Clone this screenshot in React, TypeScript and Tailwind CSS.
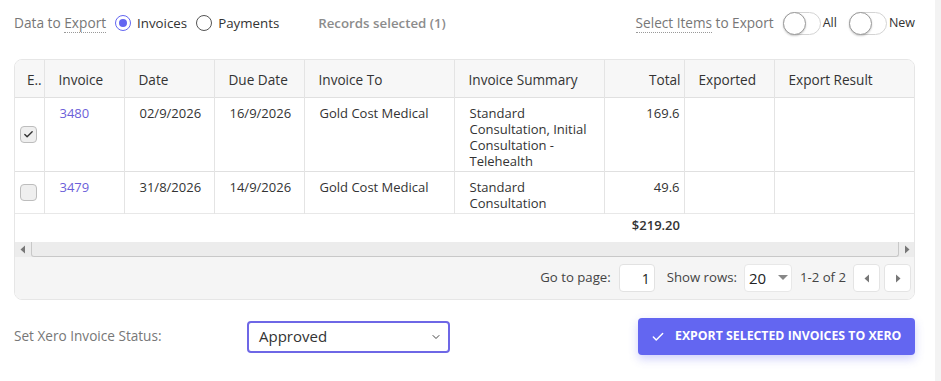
import { Check, ChevronDown } from 'lucide-react'

const columns = [
  { key: 'export', label: 'E..', width: 'w-[29px]' },
  { key: 'invoice', label: 'Invoice', width: 'w-[80px]' },
  { key: 'date', label: 'Date', width: 'w-[90px]' },
  { key: 'due', label: 'Due Date', width: 'w-[90px]' },
  { key: 'to', label: 'Invoice To', width: 'w-[150px]' },
  { key: 'summary', label: 'Invoice Summary', width: 'w-[150px]' },
  { key: 'total', label: 'Total', width: 'w-[80px]' },
  { key: 'exported', label: 'Exported', width: 'w-[90px]' },
  { key: 'result', label: 'Export Result', width: '' },
]

const rows = [
  {
    id: '3480',
    checked: true,
    date: '02/9/2026',
    due: '16/9/2026',
    to: 'Gold Cost Medical',
    summary: 'Standard Consultation, Initial Consultation - Telehealth',
    total: '169.6',
  },
  {
    id: '3479',
    checked: false,
    date: '31/8/2026',
    due: '14/9/2026',
    to: 'Gold Cost Medical',
    summary: 'Standard Consultation',
    total: '49.6',
  },
]

function Radio({ checked, label }: { checked: boolean; label: string }) {
  return (
    <label className="flex items-center gap-[6px] text-[13.3px] text-[#333]">
      <span
        className={`flex h-[16px] w-[16px] items-center justify-center rounded-full border-[1.5px] ${
          checked ? 'border-[#6366f1]' : 'border-[#555]'
        }`}
      >
        {checked && <span className="h-[8px] w-[8px] rounded-full bg-[#6366f1]" />}
      </span>
      {label}
    </label>
  )
}

function Toggle({ label }: { label: string }) {
  return (
    <div className="flex items-center gap-[2px]">
      <span className="relative h-[23px] w-[38px] rounded-full border border-[#d4d4d4] bg-white">
        <span className="absolute left-[-1px] top-[-1px] h-[23px] w-[23px] rounded-full border border-[#9a9a9a] bg-white shadow-[0_1px_2px_rgba(0,0,0,0.2)]" />
      </span>
      <span className="text-[12.5px] text-[#333]">{label}</span>
    </div>
  )
}

function Checkbox({ checked }: { checked: boolean }) {
  return (
    <span className="ml-[5px] flex h-[17px] w-[17px] items-center justify-center rounded-[4px] border border-[#bdbdbd] bg-[#efefef]">
      {checked && <Check className="h-[11px] w-[11px] text-[#333]" strokeWidth={3} />}
    </span>
  )
}

function Caret({ dir }: { dir: 'left' | 'right' }) {
  return (
    <svg width="6" height="9" viewBox="0 0 6 9" className="fill-[#777]">
      {dir === 'left' ? <path d="M5 0.5 L0.5 4.5 L5 8.5 Z" /> : <path d="M1 0.5 L5.5 4.5 L1 8.5 Z" />}
    </svg>
  )
}

export default function App() {
  return (
    <div className="flex h-[381px] w-full bg-white" style={{ fontFamily: '"Open Sans", "Noto Sans", sans-serif' }}>
      <div className="flex min-w-0 flex-1 flex-col pl-[14px] pr-[20px]">
        {/* top options */}
        <div className="flex h-[45px] items-center pt-[2px]">
          <div className="flex items-center gap-[9px]">
            <span className="text-[13.7px] text-[#777]">
              Data to <span className="border-b border-dotted border-[#999]">Export</span>
            </span>
            <Radio checked label="Invoices" />
            <Radio checked={false} label="Payments" />
          </div>
          <span className="ml-[39px] text-[13.3px] font-semibold text-[#8c8c8c]">Records selected (1)</span>
          <div className="ml-auto flex items-center">
            <span className="mr-[9px] text-[13.6px] text-[#777]">
              <span className="border-b border-dotted border-[#999]">Select Items</span> to Export
            </span>
            <Toggle label="All" />
            <div className="w-[12px]" />
            <Toggle label="New" />
          </div>
        </div>

        <div className="mt-[14px] overflow-hidden rounded-[8px] border border-[#e6e6e6]">
          <table className="w-full table-fixed border-collapse text-[13px] leading-[16px] text-[#333]">
            <thead>
              <tr className="h-[37px] bg-[#f7f7f7]">
                {columns.map((c, i) => (
                  <th
                    key={c.key}
                    className={`${c.width} ${i < columns.length - 1 ? 'border-r' : ''} border-[#e4e4e4] pt-[3px] text-[13.6px] font-normal ${
                      c.key === 'total'
                        ? 'pr-[3px] text-right'
                        : c.key === 'export'
                        ? 'pl-[12px] text-left'
                        : 'pl-[14px] text-left'
                    }`}
                  >
                    {c.label}
                  </th>
                ))}
              </tr>
            </thead>
            <tbody>
              {rows.map((r) => (
                <tr key={r.id} className="border-t border-[#e0e0e0] align-top">
                  <td className="border-r border-[#e4e4e4] align-middle">
                    <Checkbox checked={r.checked} />
                  </td>
                  <td className="border-r border-[#e4e4e4] pb-[2px] pl-[15px] pt-[7px] text-[#6c5fd9]">{r.id}</td>
                  <td className="border-r border-[#e4e4e4] pb-[2px] pl-[15px] pt-[7px]">{r.date}</td>
                  <td className="border-r border-[#e4e4e4] pb-[2px] pl-[15px] pt-[7px]">{r.due}</td>
                  <td className="border-r border-[#e4e4e4] pb-[2px] pl-[15px] pt-[7px]">{r.to}</td>
                  <td className="border-r border-[#e4e4e4] pb-[2px] pl-[15px] pr-[6px] pt-[7px]">{r.summary}</td>
                  <td className="border-r border-[#e4e4e4] pb-[2px] pr-[4px] pt-[7px] text-right">{r.total}</td>
                  <td className="border-r border-[#e4e4e4]" />
                  <td />
                </tr>
              ))}
              <tr className="h-[29px] border-t border-[#e8e8e8] align-top">
                <td colSpan={6} />
                <td className="pr-[4px] pt-[3px] text-right font-semibold">$219.20</td>
                <td colSpan={2} />
              </tr>
            </tbody>
          </table>

          {/* horizontal scrollbar */}
          <div className="flex h-[15px] items-stretch bg-[#ececec]">
            <div className="flex w-[16px] items-center justify-center">
              <Caret dir="left" />
            </div>
            <div className="flex-1 rounded-b-[3px] border-b border-l border-r border-[#c8c8c8] bg-[#ececec]" />
            <div className="flex w-[15px] items-center justify-center">
              <Caret dir="right" />
            </div>
          </div>

          {/* pagination */}
          <div className="flex h-[42px] items-center justify-end bg-[#f5f5f5] pr-[3px] text-[13.2px] text-[#444]">
            <span>Go to page:</span>
            <input
              readOnly
              value="1"
              className="ml-[8px] h-[28px] w-[36px] rounded-[4px] border border-[#e2e2e2] bg-white pr-[4px] text-right text-[14px] text-[#222] outline-none"
            />
            <span className="ml-[12px]">Show rows:</span>
            <div className="ml-[7px] flex h-[28px] w-[48px] items-center justify-between rounded-[4px] border border-[#e8e8e8] bg-white pl-[4px] pr-[3px] text-[15px] text-[#222]">
              20
              <svg width="10" height="6" viewBox="0 0 10 6" className="fill-[#888]">
                <path d="M0 0 H10 L5 5 Z" />
              </svg>
            </div>
            <span className="ml-[8px]">1-2 of 2</span>
            <div className="ml-[7px] flex gap-[4px]">
              <button className="flex h-[28px] w-[27px] items-center justify-center rounded-[4px] border border-[#e4e4e4] bg-white">
                <Caret dir="left" />
              </button>
              <button className="flex h-[28px] w-[27px] items-center justify-center rounded-[4px] border border-[#e4e4e4] bg-white">
                <Caret dir="right" />
              </button>
            </div>
          </div>
        </div>

        {/* bottom actions */}
        <div className="mt-[18px] flex items-center">
          <span className="w-[233px] text-[13.6px] text-[#777]">Set Xero Invoice Status:</span>
          <div className="flex h-[32px] w-[203px] items-center justify-between rounded-[4px] border-2 border-[#6e67e6] pl-[10px] pr-[6px] text-[15px] text-[#333]">
            Approved
            <ChevronDown className="h-[12px] w-[12px] text-[#444]" strokeWidth={2} />
          </div>
          <button className="ml-auto flex h-[37px] w-[277px] items-center gap-[10px] rounded-[4px] bg-[#6366f1] pl-[13px] text-[12.3px] font-bold text-white shadow-[0_4px_10px_rgba(99,102,241,0.3)]">
            <Check className="h-[14px] w-[14px]" strokeWidth={2.5} />
            EXPORT SELECTED INVOICES TO XERO
          </button>
        </div>
      </div>
      <div className="w-[6px] bg-[#f3f3f3]" />
    </div>
  )
}
